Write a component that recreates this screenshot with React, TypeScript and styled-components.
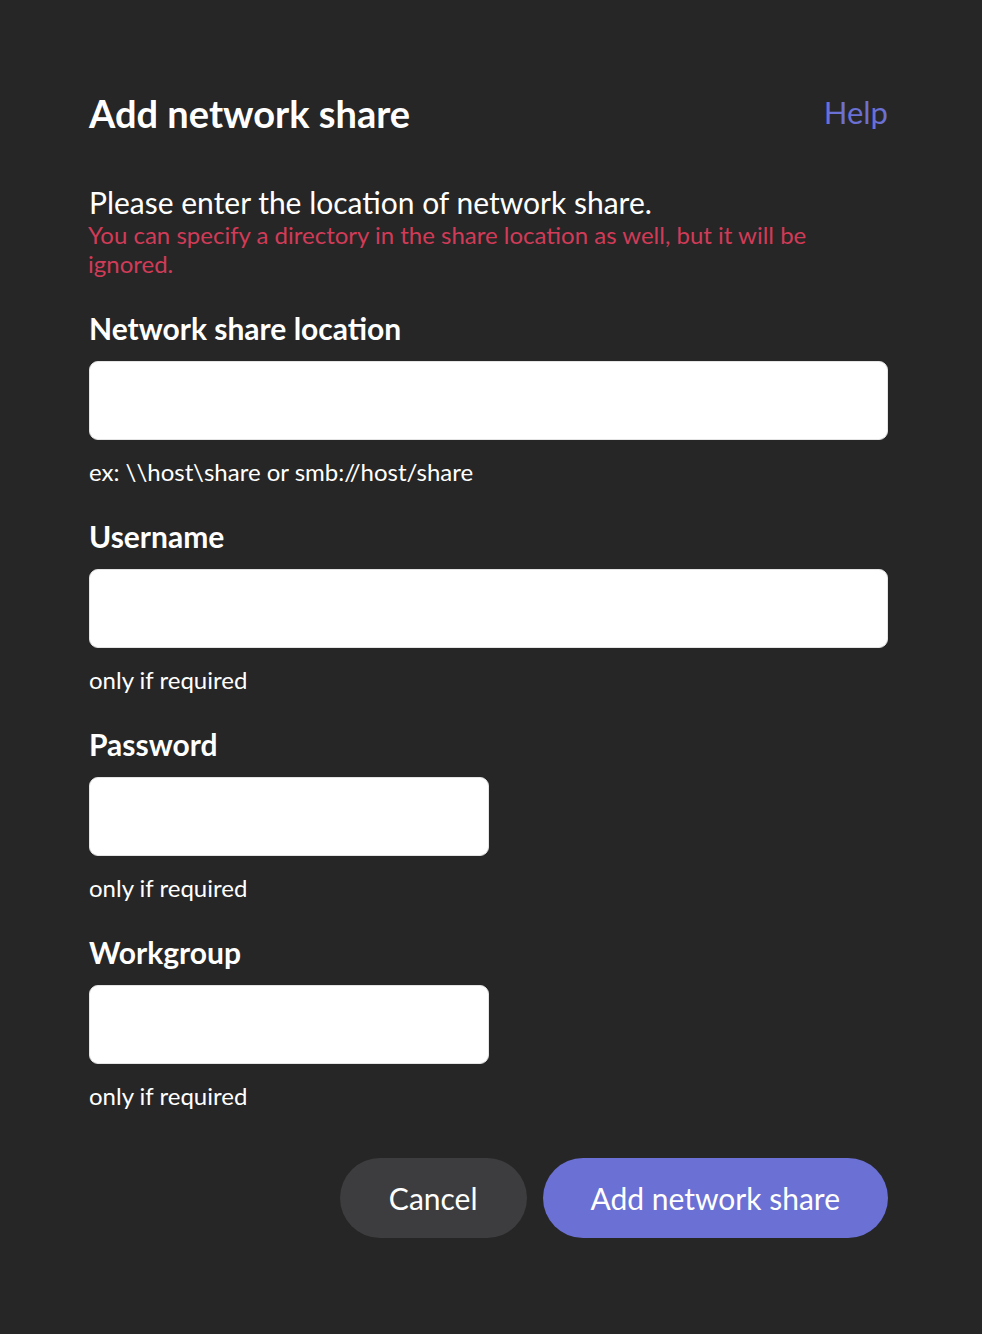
import React from 'react'
import styled, { createGlobalStyle } from 'styled-components'

const GlobalStyle = createGlobalStyle`
  html, body {
    margin: 0;
    padding: 0;
    background: #262626;
  }
  body {
    font-family: Lato, "Noto Sans", sans-serif;
    color: #ffffff;
  }
`

const Page = styled.div`
  min-height: 1334px;
  box-sizing: border-box;
  padding: 91px 94px 0 89px;
`

const Header = styled.div`
  display: flex;
  align-items: center;
  justify-content: space-between;
  height: 44px;
`

const Title = styled.h1`
  margin: 0;
  font-size: 38px;
  line-height: 44px;
  font-weight: 700;
`

const HelpLink = styled.a`
  font-size: 31px;
  color: #6b70d4;
  text-decoration: none;
  margin-top: -2px;
`

const Intro = styled.p`
  margin: 50px 0 0;
  font-size: 30px;
  line-height: 35px;
`

const Warning = styled.p`
  margin: 0 0 0 -1px;
  font-size: 24px;
  line-height: 29px;
  color: #d13b58;
`

const Field = styled.div<{ $first?: boolean }>`
  display: flex;
  flex-direction: column;
  margin-top: ${(p) => (p.$first ? '33px' : '33px')};
`

const Label = styled.label`
  font-size: 30px;
  line-height: 34px;
  font-weight: 700;
`

const Input = styled.input<{ $narrow?: boolean }>`
  box-sizing: border-box;
  margin-top: 16px;
  width: ${(p) => (p.$narrow ? '400px' : '100%')};
  height: 79px;
  border: 1px solid #e4e4e4;
  border-radius: 9px;
  background: #ffffff;
  outline: none;
  padding: 0 18px;
  font: inherit;
  font-size: 24px;
`

const Hint = styled.span`
  margin-top: 18px;
  font-size: 24px;
  line-height: 28px;
  color: #ffffff;
`

const Actions = styled.div`
  display: flex;
  justify-content: flex-end;
  gap: 16px;
  margin-top: 48px;
`

const Button = styled.button<{ $primary?: boolean }>`
  height: 80px;
  border: none;
  border-radius: 40px;
  padding: 0 ${(p) => (p.$primary ? '48px' : '49px')};
  background: ${(p) => (p.$primary ? '#6b70d4' : '#3d3d3f')};
  color: #ffffff;
  font-family: Lato, "Noto Sans", sans-serif;
  font-size: 30px;
  cursor: pointer;
`

const fields = [
  { label: 'Network share location', hint: 'ex: \\\\host\\share or smb://host/share', narrow: false, type: 'text' },
  { label: 'Username', hint: 'only if required', narrow: false, type: 'text' },
  { label: 'Password', hint: 'only if required', narrow: true, type: 'password' },
  { label: 'Workgroup', hint: 'only if required', narrow: true, type: 'text' },
]

export default function App() {
  return (
    <>
      <GlobalStyle />
      <Page>
        <Header>
          <Title>Add network share</Title>
          <HelpLink href="#">Help</HelpLink>
        </Header>
        <Intro>Please enter the location of network share.</Intro>
        <Warning>You can specify a directory in the share location as well, but it will be ignored.</Warning>
        {fields.map((f, i) => (
          <Field key={f.label} $first={i === 0}>
            <Label>{f.label}</Label>
            <Input type={f.type} $narrow={f.narrow} />
            <Hint>{f.hint}</Hint>
          </Field>
        ))}
        <Actions>
          <Button>Cancel</Button>
          <Button $primary>Add network share</Button>
        </Actions>
      </Page>
    </>
  )
}
